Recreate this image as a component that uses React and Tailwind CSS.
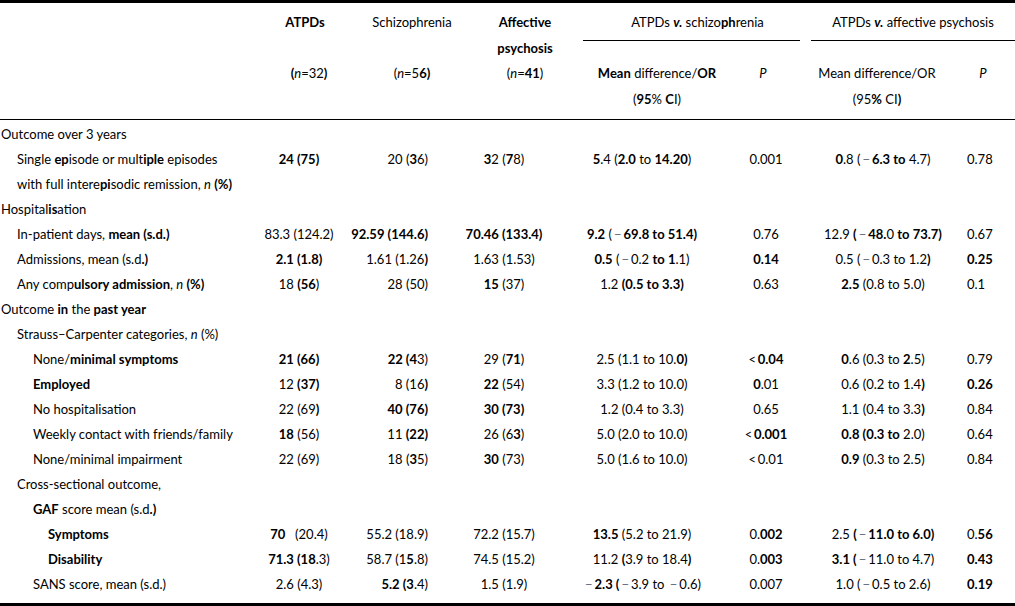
import React from 'react';

// Tiny markup: **bold**, _italic_, and − rendered as a grey minus
const fmt = (s) => {
  const parts = s.split(/(\*\*[^*]+\*\*|_[^_]+_|−)/g);
  return parts.map((p, i) => {
    if (!p) return null;
    if (p.startsWith('**') && p.endsWith('**')) {
      return <span key={i} className="font-bold">{fmt(p.slice(2, -2))}</span>;
    }
    if (p.length > 1 && p.startsWith('_') && p.endsWith('_')) {
      return <em key={i}>{p.slice(1, -1)}</em>;
    }
    if (p === '−') {
      return <span key={i} className="text-gray-500 mx-[2px]">−</span>;
    }
    return <React.Fragment key={i}>{p}</React.Fragment>;
  });
};

const indent = ['pl-[1px]', 'pl-[17px]', 'pl-[33px]', 'pl-[48px]'];

const rows = [
  { label: 'Outcome over 3 years', lvl: 0 },
  { label: 'Single **ep**isode or mult**iple** episodes', lvl: 1, v: ['**24 (75)**', '20 (**3**6)', '**3**2 (**7**8)', '**5**.4 (**2.0** to **14.20**)', '0.001', '**0**.8 (−**6.3 to** 4.7)', '0.78'] },
  { label: 'with full intere**pi**sodic remission, _n_ **(%)**', lvl: 1 },
  { label: 'Hospital**is**ation', lvl: 0 },
  { label: 'In-patient days, **mean (s.d.)**', lvl: 1, v: ['83.3 (124.2)', '**92.59 (144.6)**', '**70.46 (133.4)**', '**9.2** (−**69.8 to 51.4)**', '0.76', '12.9 **(**−**48.**0 **to 73.7)**', '0.67'] },
  { label: 'Admissions, mean (s.d**.)**', lvl: 1, v: ['**2.1 (1.8)**', '1.61 (1.26**)**', '1.63 (1.53)', '**0.5** (−0.2 **to 1**.1)', '**0.14**', '0.5 (−0.3 to 1.2**)**', '**0.25**'] },
  { label: 'Any comp**ulsory admission**, _n_ **(%)**', lvl: 1, v: ['18 **(56**)', '28 (50)', '**15** (37)', '1.2 **(0.5 to 3.3)**', '0.63', '**2.5** (0.8 to 5.0)', '0.1'] },
  { label: 'Outcome **in** the **past year**', lvl: 0 },
  { label: 'Strauss–Carpenter categories, _n_ (%)', lvl: 1 },
  { label: 'None/**minimal symptoms**', lvl: 2, v: ['**21 (66)**', '**22 (4**3)', '29 (**71**)', '2.5 (1.1 to 10.**0)**', '<\u2009**0.04**', '**0**.6 (0.3 to **2**.5)', '0.79'] },
  { label: '**Employed**', lvl: 2, v: ['12 **(37)**', '8 (16**)**', '**22** (54)', '3.3 (1.2 to 10.0)', '**0**.01', '0.6 (0.2 to 1.4**)**', '**0.26**'] },
  { label: 'No hospitalisation', lvl: 2, v: ['22 (69**)**', '**40 (76)**', '**30 (73)**', '1.2 (0.4 to 3.3)', '0.65', '1.1 (0.4 to 3.3**)**', '0.84'] },
  { label: 'Weekly contact with friends/family', lvl: 2, v: ['**18** (56)', '11 **(22)**', '26 (6**3**)', '5.0 (2.0 to 10.0)', '<\u2009**0.001**', '**0.8 (0.3 to** 2.0)', '0.64'] },
  { label: 'None/minimal impairment', lvl: 2, v: ['22 (69)', '18 (**3**5)', '**30** (73)', '5.0 (1.6 to 10.0)', '<\u20090.01', '**0.9** (0.3 to 2.5)', '0.84'] },
  { label: 'Cross-sectional outcome,', lvl: 1 },
  { label: '**GAF** score mean (s.d**.)**', lvl: 2 },
  { label: '**Symptoms**', lvl: 3, v: ['**70**\u2003(20.4)', '55.2 (18.9)', '72.2 (15.7)', '**13.5** (5.2 to 21.9)', '0.**002**', '2.5 **(**−**11.0 to 6.0)**', '0.**56**'] },
  { label: '**Disability**', lvl: 3, v: ['**71.3 (18**.3)', '58.7 (1**5**.8)', '74.5 (15.2)', '11.2 **(**3.9 to 18.4**)**', '0.**003**', '**3.1 (**−11.0 to 4.7)', '**0.43**'] },
  { label: 'SANS score, mean (s.d.)', lvl: 2, v: ['2.6 (4.3)', '**5.2 (3**.4)', '1.5 (1.9)', '−**2.3 (**−3.9 to −0.6)', '0.007', '1.0 (−0.5 to 2.6)', '**0.19**'] },
];

// ATPDs | Schizophrenia | Affective | MD | P | MD | P
const cellClass = [
  'text-center pr-[4px]',
  'text-right pr-[4px]',
  'text-center pl-[24px]',
  'text-center',
  'text-center',
  'text-center',
  'text-left pl-[1px]',
];

const App = () => {
  return (
    <div className="w-[1015px] h-[606px] bg-white text-black text-[13px] font-['Lato',sans-serif] overflow-hidden">
      <div className="border-t-[3px] border-black" />

      {/* Header */}
      <div className="border-b border-black pb-[7px]">
        <div className="flex h-[58px] items-start leading-[26px]">
          <div className="w-[262px] shrink-0" />
          <div className="w-[86px] shrink-0 pt-[6px] text-center font-bold">ATPDs</div>
          <div className="w-[128px] shrink-0 pt-[6px] text-center">Schizophrenia</div>
          <div className="w-[98px] shrink-0 pt-[6px] text-center font-bold">
            <div>Affective</div>
            <div>psychosis</div>
          </div>
          <div className="ml-[9px] w-[217px] h-[38px] shrink-0 border-b border-black pt-[6px] pl-[12px] text-center">
            {fmt('ATPDs **_v._** schizo**ph**renia')}
          </div>
          <div className="ml-[11px] w-[204px] h-[38px] shrink-0 border-b border-black pt-[6px] text-center">
            {fmt('ATPDs **_v._** affective psychosis')}
          </div>
        </div>
        <div className="flex items-start leading-[25.5px]">
          <div className="w-[262px] shrink-0" />
          <div className="w-[86px] shrink-0 pl-[8px] text-center">{fmt('**(**_n_=32**)**')}</div>
          <div className="w-[128px] shrink-0 text-center">{fmt('(_n_=5**6)**')}</div>
          <div className="w-[98px] shrink-0 text-center">{fmt('(_n_=**41**)')}</div>
          <div className="w-[166px] shrink-0 text-center">
            <div>{fmt('**Mean** difference/**OR**')}</div>
            <div>{fmt('(**95**% **C**I)')}</div>
          </div>
          <div className="w-[46px] shrink-0 text-center">{fmt('_P_')}</div>
          <div className="w-[182px] shrink-0 text-center">
            <div>{fmt('Mean difference/OR')}</div>
            <div>{fmt('(95**%** CI**)**')}</div>
          </div>
          <div className="w-[30px] shrink-0 text-center">{fmt('_P_')}</div>
        </div>
      </div>

      {/* Body */}
      <div className="pt-[2px] pb-[6px] border-b-4 border-black">
        {rows.map((r, i) => (
          <div
            key={i}
            className="grid grid-cols-[262px_78px_92px_120px_180px_68px_166px_49px] h-[25px] items-center leading-[25px] whitespace-nowrap"
          >
            <div className={indent[r.lvl]}>{fmt(r.label)}</div>
            {r.v
              ? r.v.map((c, j) => (
                  <div key={j} className={cellClass[j]}>{fmt(c)}</div>
                ))
              : null}
          </div>
        ))}
      </div>
    </div>
  );
};

export default App;
